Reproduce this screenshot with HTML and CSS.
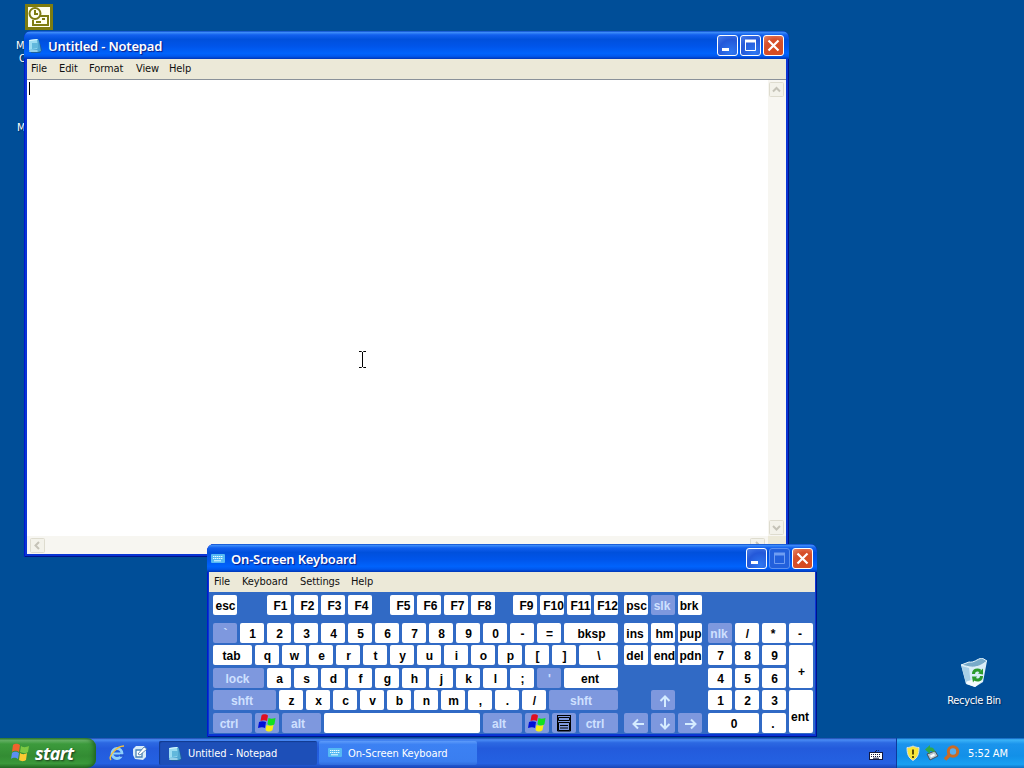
FILE: index.html
```
<!DOCTYPE html>
<html lang="en">
<head>
    <meta charset="UTF-8">
    <title>Desktop</title>
    <link rel="stylesheet" href="styles.css">
</head>
<body>

    <!-- Shared icons -->
    <svg class="defs" width="0" height="0">
        <symbol id="note" viewBox="0 0 16 16">
            <path d="M3 3l9-1 3 10-2 3-9 0z" fill="#1d5f9c"/>
            <path d="M3 2l8-1 1 2 2 10-3 1-9 0z" fill="#4fa6d2"/>
            <path d="M2 2l8-1 1 8-1 2-8 1z" fill="#9bdcf2"/>
            <path d="M5 5l6 0 0 5-6 1z" fill="#62b8dc"/>
            <path d="M2.500 2.500l8-1M2.500 13l8 0" stroke="#dcf8ff"/>
        </symbol>
        <symbol id="kbd" viewBox="0 0 16 16">
            <rect x="1" y="3" width="14" height="9" rx="1" fill="#55b9f4"/>
            <path d="M3 5.500h10M3 7.500h10" stroke="#e6fbff" stroke-dasharray="1.400 .6"/>
            <path d="M4 9.800h7" stroke="#e6fbff"/>
        </symbol>
        <symbol id="winkey" viewBox="0 0 18 18">
            <path d="M3.500 1.500c2-2 5-1 6.500 0l-1 5.500c-2-1-4-1-6.500 0z" fill="#e01020"/>
            <path d="M10.500 4c2 1 4 1 7 0l-1 6c-2 2-5 2-7 0z" fill="#10e020"/>
            <path d="M1 8c2-1 5-1 7 0l-1 6c-2-1-4-1-7 0z" fill="#0010d8"/>
            <path d="M8.500 11c2 1 5 1 7 0l-1 5c-2 2-5 2-7 0z" fill="#f8f010"/>
        </symbol>
        <symbol id="arrow" viewBox="0 0 14 14">
            <path d="M13 7H3M7 2.500L2.500 7L7 11.500" fill="none" stroke="#d5ecff" stroke-width="2"/>
        </symbol>
    </svg>

    <div class="desktop">
        <div class="shortcuts">
            <svg width="28" height="26" viewBox="0 0 28 26">
                <rect width="28" height="26" fill="#7e7c10"/>
                <rect x="3" y="3" width="22" height="20" fill="#fffff0"/>
                <g fill="none" stroke="#7e7c10" stroke-width="2">
                    <circle cx="10" cy="9.500" r="5.500"/>
                    <path d="M10 6v4h3M15 12h8v9H8v-5M17 15h3M11 18h5"/>
                </g>
            </svg>
            <span class="label label-m">M</span>
            <span class="label label-o">O</span>
            <span class="label label-n">M</span>
        </div>

        <div class="recycle">
            <svg width="30" height="32" viewBox="0 0 30 32">
                <path d="M2 7l9 2 17-6-4 21-8 5-9-3z" fill="#d9edf8"/>
                <path d="M2 7l8-3c5 1 8-3 13-4l5 3c-5 4-10 7-17 6z" fill="#78aac9" stroke="#e8f6fd"/>
                <path d="M2.500 8l4.500 17 5 2-2-17z" fill="#a8cfe6"/>
                <path d="M7 24c5-3 10-2 16-1l-7 6-8-3z" fill="#f4fbff"/>
                <g fill="none" stroke="#2c9a2c" stroke-width="3">
                    <path d="M14.500 16c0-4 4-5 7-3M22.500 18c0 4-4 5-7 3"/>
                </g>
                <path d="M19 15.500l5-5v6zM18 18.500l-5 0 1 6z" fill="#2c9a2c"/>
            </svg>
            <span class="label">Recycle Bin</span>
        </div>

        <!-- Notepad -->
        <div class="window notepad">
            <div class="titlebar">
                <svg class="title-icon" width="16" height="16"><use href="#note"/></svg>
                <span class="title">Untitled - Notepad</span>
                <div class="buttons">
                    <span class="btn"><svg width="19" height="19"><rect x="4" y="12" width="7" height="3" fill="#fff"/></svg></span>
                    <span class="btn"><svg width="19" height="19"><path d="M4.500 4v10.500h10V4" fill="none" stroke="#fff"/><path d="M4 5h11" stroke="#fff" stroke-width="3"/></svg></span>
                    <span class="btn close"><svg width="19" height="19"><path d="M4.500 4.500l10 10M14.500 4.500l-10 10" stroke="#fff" stroke-width="2.200"/></svg></span>
                </div>
            </div>
            <div class="menubar">
                <span class="m-file">File</span>
                <span class="m-edit">Edit</span>
                <span class="m-format">Format</span>
                <span class="m-view">View</span>
                <span>Help</span>
            </div>
            <div class="editor">
                <div class="page"><span class="caret"></span></div>
                <div class="vscroll">
                    <svg width="16" height="16"><rect x=".5" y=".5" width="14" height="14" rx="1" fill="#f3f2ea" stroke="#dedccf"/><path d="M4 9.500l3.500-3.500L11 9.500" fill="none" stroke="#c5c3b8" stroke-width="2"/></svg>
                    <svg width="16" height="16"><rect x=".5" y=".5" width="14" height="14" rx="1" fill="#f3f2ea" stroke="#dedccf"/><path d="M4 6l3.500 3.500L11 6" fill="none" stroke="#c5c3b8" stroke-width="2"/></svg>
                </div>
                <div class="hscroll">
                    <svg width="16" height="16"><rect x=".5" y=".5" width="14" height="14" rx="1" fill="#f3f2ea" stroke="#dedccf"/><path d="M9 4L5.500 7.500 9 11" fill="none" stroke="#c5c3b8" stroke-width="2"/></svg>
                    <svg width="16" height="16"><rect x=".5" y=".5" width="14" height="14" rx="1" fill="#f3f2ea" stroke="#dedccf"/><path d="M6 4l3.500 3.500L6 11" fill="none" stroke="#c5c3b8" stroke-width="2"/></svg>
                </div>
                <div class="corner"></div>
            </div>
        </div>

        <svg class="ibeam" width="9" height="17"><path d="M1 .5h2.500l1 1 1-1H8M1 16.500h2.500l1-1 1 1H8M4.500 1v15" fill="none" stroke="#000"/></svg>

        <!-- On-Screen Keyboard -->
        <div class="window osk">
            <div class="titlebar">
                <svg class="title-icon" width="16" height="16"><use href="#kbd"/></svg>
                <span class="title">On-Screen Keyboard</span>
                <div class="buttons">
                    <span class="btn"><svg width="19" height="19"><rect x="4" y="12" width="7" height="3" fill="#fff"/></svg></span>
                    <span class="btn disabled"><svg width="19" height="19"><path d="M4.500 4v10.500h10V4" fill="none" stroke="#6f9df2"/><path d="M4 5h11" stroke="#6f9df2" stroke-width="3"/></svg></span>
                    <span class="btn close"><svg width="19" height="19"><path d="M4.500 4.500l10 10M14.500 4.500l-10 10" stroke="#fff" stroke-width="2.200"/></svg></span>
                </div>
            </div>
            <div class="menubar">
                <span class="k-file">File</span>
                <span class="k-keyboard">Keyboard</span>
                <span class="k-settings">Settings</span>
                <span>Help</span>
            </div>
            <div class="keys">
                <div class="main">
                    <div class="row">
                        <b class="gap-esc">esc</b><b class="fn">F1</b><b class="fn">F2</b><b class="fn">F3</b><b class="fn gap-f">F4</b>
                        <b class="fn">F5</b><b class="fn">F6</b><b class="fn">F7</b><b class="fn gap-f">F8</b>
                        <b class="fn">F9</b><b class="fn">F10</b><b class="fn">F11</b><b class="fn">F12</b>
                    </div>
                    <div class="row">
                        <b class="mod">`</b><b>1</b><b>2</b><b>3</b><b>4</b><b>5</b><b>6</b><b>7</b><b>8</b><b>9</b><b>0</b><b>-</b><b>=</b><b class="w54">bksp</b>
                    </div>
                    <div class="row">
                        <b class="w39 left">tab</b><b>q</b><b>w</b><b>e</b><b>r</b><b>t</b><b>y</b><b>u</b><b>i</b><b>o</b><b>p</b><b>[</b><b>]</b><b class="w39">\</b>
                    </div>
                    <div class="row">
                        <b class="w51 mod left">lock</b><b>a</b><b>s</b><b>d</b><b>f</b><b>g</b><b>h</b><b>j</b><b>k</b><b>l</b><b>;</b><b class="mod">'</b><b class="w54 left">ent</b>
                    </div>
                    <div class="row">
                        <b class="w63 mod shift">shft</b><b>z</b><b>x</b><b>c</b><b>v</b><b>b</b><b>n</b><b>m</b><b>,</b><b>.</b><b>/</b><b class="w69 mod shift">shft</b>
                    </div>
                    <div class="row">
                        <b class="w39 mod ctrl">ctrl</b><b class="mod icon"><svg width="18" height="18"><use href="#winkey"/></svg></b><b class="w39 mod ctrl">alt</b><b class="space"></b><b class="w39 mod ctrl">alt</b><b class="mod icon"><svg width="18" height="18"><use href="#winkey"/></svg></b><b class="mod icon"><svg width="14" height="18"><path d="M0 1.500h14M1.500 3.500h11v3h-11zM1.500 8.500h11v8h-11zM3 11.500h8M3 14h8" fill="none" stroke="#000"/><path d="M.5 1v16h13V1" fill="none" stroke="#000"/></svg></b><b class="w39 mod ctrl">ctrl</b>
                    </div>
                </div>
                <div class="nav">
                    <div class="row"><b>psc</b><b class="mod nudge">slk</b><b class="nudge">brk</b></div>
                    <div class="row"><b class="nudge">ins</b><b class="right">hm</b><b>pup</b></div>
                    <div class="row"><b class="nudge">del</b><b class="right">end</b><b>pdn</b></div>
                    <div class="row"></div>
                    <div class="row middle"><b class="mod arrow"><svg class="up" width="14" height="14"><use href="#arrow"/></svg></b></div>
                    <div class="row">
                        <b class="mod arrow"><svg width="14" height="14"><use href="#arrow"/></svg></b>
                        <b class="mod arrow"><svg class="down" width="14" height="14"><use href="#arrow"/></svg></b>
                        <b class="mod"><svg class="fwd" width="14" height="14"><use href="#arrow"/></svg></b>
                    </div>
                </div>
                <div class="numpad">
                    <b class="mod nudge">nlk</b><b>/</b><b class="nudge">*</b><b class="nudge">-</b>
                    <b>7</b><b>8</b><b>9</b><b class="tall plus">+</b>
                    <b>4</b><b>5</b><b>6</b>
                    <b>1</b><b>2</b><b>3</b><b class="tall enter">ent</b>
                    <b class="wide">0</b><b class="nudge">.</b>
                </div>
            </div>
        </div>

        <!-- Taskbar -->
        <div class="taskbar">
            <div class="start">
                <svg width="21" height="19" viewBox="0 0 21 19">
                    <path d="M3 2c3-2 5-1 7 0l-1 7c-2-1-4-2-7 0z" fill="#f0622d"/>
                    <path d="M11 3c3 2 5 1 8 0l-1 6c-3 2-5 1-8 0z" fill="#7cc843"/>
                    <path d="M2 10c3-2 5-1 7 0l-1 6c-2-1-4-2-7 0z" fill="#5b8ff2"/>
                    <path d="M10 10c3 2 5 1 7 0l-1 7c-3 2-5 1-7 0z" fill="#fbca32"/>
                </svg>
                <span>start</span>
            </div>
            <div class="quick">
                <svg width="16" height="18" viewBox="0 0 16 18">
                    <circle cx="8" cy="9.500" r="5" fill="none" stroke="#8fd0fb" stroke-width="2.800"/>
                    <path d="M4 9.500h9" stroke="#8fd0fb" stroke-width="2"/>
                    <path d="M11 11.500h4" stroke="#2456cf" stroke-width="2.500"/>
                    <path d="M2 16C-1 13 7 2 15 2" fill="none" stroke="#f0c040" stroke-width="1.500"/>
                </svg>
                <svg width="16" height="16" viewBox="0 0 16 16">
                    <path d="M1 4l3-3 8 0 2 3 0 8-3 3-8-1-2-4z" fill="#d8ebf8"/>
                    <path d="M4 5h6v7H4z" fill="#fff" stroke="#4583b8" stroke-width="1.300"/>
                    <path d="M6 9l6-7 3 2-7 6z" fill="#fff" stroke="#3c6f9e" stroke-width=".8"/>
                </svg>
            </div>
            <div class="task active"><svg width="16" height="16"><use href="#note"/></svg><span>Untitled - Notepad</span></div>
            <div class="task"><svg width="16" height="16"><use href="#kbd"/></svg><span>On-Screen Keyboard</span></div>
            <svg class="langbar" width="14" height="14" viewBox="0 0 14 14">
                <path d="M6.500 5V3.500h3V2" fill="none" stroke="#101840" stroke-dasharray="1 1"/>
                <rect x=".5" y="5.500" width="13" height="7" fill="#fff" stroke="#101840"/>
                <path d="M2 7.500h10M2 9.500h10" stroke="#101840" stroke-dasharray="1 1"/>
                <path d="M4 11.200h6" stroke="#101840"/>
            </svg>
            <div class="tray">
                <svg width="14" height="16" viewBox="0 0 14 16">
                    <path d="M7 1c2 1 4 1.500 6 1.500 0 6-1 10-6 13-5-3-6-7-6-13C3 2.500 5 2 7 1z" fill="#f8e63a" stroke="#d9dfe6"/>
                    <path d="M7 4.500v5M7 11v2" stroke="#3a3200" stroke-width="1.700"/>
                </svg>
                <svg width="15" height="16" viewBox="0 0 15 16">
                    <path d="M3 9l8-3 3 5-8 4z" fill="#b9c4cd" stroke="#44525e"/>
                    <path d="M6.500 11.500l4-2" stroke="#fff" stroke-width="2"/>
                    <path d="M1 4.500l5-4.500v2.500c4 0 5 2 4.500 5C9.500 6.500 8 6 6 6v3z" fill="#32a848"/>
                </svg>
                <svg width="17" height="16" viewBox="0 0 17 16">
                    <circle cx="10" cy="6.500" r="4.700" fill="#58aef0" stroke="#c96b25" stroke-width="3"/>
                    <path d="M7 9.500L2 14.500" stroke="#c96b25" stroke-width="3.500"/>
                </svg>
                <span class="clock">5:52 AM</span>
            </div>
        </div>
    </div>

</body>
</html>
```
FILE: styles.css
```
* {
    box-sizing: border-box;
}

body {
    margin: 0;
    font-family: "DejaVu Sans Condensed", "DejaVu Sans", sans-serif;
    font-stretch: condensed;
    font-size: 11px;
    overflow: hidden;
}

svg {
    display: block;
    flex: none;
}

.defs {
    position: absolute;
}

.desktop {
    position: relative;
    width: 1024px;
    height: 768px;
    background: #004e98;
    overflow: hidden;
    white-space: nowrap;
}

/* Desktop icons */
.shortcuts {
    position: absolute;
    left: 25px;
    top: 4px;
}

.label {
    color: #fff;
    font-size: 11px;
    letter-spacing: -0.3px;
    line-height: 13px;
    text-shadow: 1px 1px 1px #002a5c;
}

.shortcuts .label {
    display: block;
    width: 12px;
    margin-left: -9px;
}

.shortcuts .label-m {
    margin-top: 9px;
}

.shortcuts .label-o {
    margin-left: -6px;
}

.shortcuts .label-n {
    margin-top: 56px;
    margin-left: -8px;
}

.recycle {
    position: absolute;
    left: 934px;
    top: 658px;
    width: 80px;
    display: flex;
    flex-direction: column;
    align-items: center;
    gap: 4px;
}

/* Windows */
.window {
    position: absolute;
    display: flex;
    flex-direction: column;
    border-radius: 7px 7px 0 0;
    padding: 0 3px 3px;
    background: #0a35d4;
    box-shadow: inset 1px 0 #0019cf, inset -1px -1px #00138c;
}

.notepad {
    left: 24px;
    top: 31px;
    width: 765px;
    height: 526px;
}

.osk {
    left: 207px;
    top: 544px;
    width: 610px;
    height: 193px;
    padding: 0 2px 3px;
}

.titlebar {
    display: flex;
    align-items: center;
    flex: none;
    height: 28px;
    margin: 0 -3px;
    padding: 1px 5px 0 3px;
    border-radius: 7px 7px 0 0;
    background: linear-gradient(#0a47c8 0, #3c8cf8 5%, #1260ee 14%, #0050dc 30%, #0055ea 55%, #0063fc 80%, #0058ee 90%, #0036b6 100%);
}

.osk .titlebar {
    margin: 0 -2px;
    padding-right: 4px;
}

.title {
    flex: 1;
    margin-left: 5px;
    color: #fff;
    font-family: "Noto Sans", sans-serif;
    font-stretch: normal;
    font-weight: 600;
    font-size: 13px;
    letter-spacing: -0.2px;
    line-height: 18px;
    padding-top: 1px;
    text-shadow: 1px 1px 1px #0a1883;
}

.buttons {
    display: flex;
    gap: 2px;
}

.btn {
    width: 21px;
    height: 21px;
    border: 1px solid #fff;
    border-radius: 3px;
    background: radial-gradient(circle at 70% 85%, #2f78f2, #2458d8 60%, #4a7eea);
}

.btn.close {
    background: radial-gradient(circle at 60% 75%, #d64a1e, #d6502c 60%, #e88a6c);
}

.btn.disabled {
    border-color: #5c90ee;
    background: #2260dc;
}

.menubar {
    display: flex;
    align-items: center;
    flex: none;
    height: 20px;
    padding: 0 0 2px 4px;
    background: #ece9d8;
    color: #111;
    font-size: 11px;
    letter-spacing: -0.1px;
}

.m-file { width: 28px; }
.m-edit { width: 30px; }
.m-format { width: 47px; }
.m-view { width: 33px; }

.osk .menubar {
    padding: 0 0 1px 5px;
}

.k-file { width: 28px; }
.k-keyboard { width: 58px; }
.k-settings { width: 51px; }

.editor {
    flex: 1;
    display: grid;
    grid-template-columns: 1fr 18px;
    grid-template-rows: 1fr 18px;
    border-top: 1px solid #8a9199;
    background: #fff;
}

.caret {
    display: block;
    width: 1px;
    height: 13px;
    margin: 2px 0 0 2px;
    background: #000;
}

.vscroll,
.hscroll {
    display: flex;
    justify-content: space-between;
    background: #f7f6f1;
}

.vscroll {
    flex-direction: column;
    padding: 2px 1px 0;
}

.hscroll {
    padding: 2px 2px 0 3px;
}

.corner {
    background: #ece9d8;
}

.ibeam {
    position: absolute;
    left: 358px;
    top: 351px;
}

/* Keyboard */
.keys {
    flex: 1;
    display: flex;
    gap: 6px;
    padding: 3px 2px 0 4px;
    background: #316ac5;
    font: bold 12px/20px "Liberation Sans", Arial, sans-serif;
}

.main,
.nav {
    display: grid;
    grid-template-rows: 28px 22px 23px 22px 23px 20px;
}

.row {
    display: flex;
    gap: 3px;
    height: 20px;
}

.middle {
    justify-content: center;
}

.keys b {
    display: flex;
    align-items: center;
    justify-content: center;
    flex: none;
    width: 24px;
    padding: 1px 0 0 1px;
    border-radius: 2px;
    background: #fff;
    color: #000;
    overflow: hidden;
}

.keys .mod {
    background: #7e98de;
    color: #cfe0ff;
}

.keys .gap-esc { margin-right: 27px; }
.keys .gap-f { margin-right: 15px; }
.keys .w39 { width: 39px; }
.keys .w51 { width: 51px; }
.keys .w54 { width: 54px; }
.keys .w63 { width: 63px; }
.keys .w69 { width: 69px; }
.keys .space { width: 156px; }
.keys .fn { padding-left: 3px; }
.keys .icon { padding: 0; }
.keys .left { padding: 1px 2px 0 0; }
.keys .ctrl { padding: 1px 7px 0 0; }
.keys .shift { padding: 1px 5px 0 0; }
.keys .right { padding-left: 3px; }
.keys .nudge { padding: 1px 2px 0 0; }
.keys .arrow { padding-left: 4px; }

.up { transform: rotate(90deg); }
.down { transform: rotate(-90deg); }
.fwd { transform: rotate(180deg); }

.numpad {
    display: grid;
    grid-template-columns: repeat(4, 24px);
    grid-template-rows: 22px 23px 22px 23px 20px;
    column-gap: 3px;
    padding-top: 28px;
}

.numpad b {
    height: 20px;
}

.numpad .tall {
    grid-row: span 2;
    height: 43px;
}

.keys .plus {
    padding-top: 11px;
}

.keys .enter {
    padding: 11px 2px 0 0;
}

.keys .wide {
    grid-column: span 2;
    width: 51px;
}

/* Taskbar */
.taskbar {
    position: absolute;
    left: 0;
    bottom: 0;
    width: 1024px;
    height: 30px;
    display: flex;
    align-items: center;
    background: linear-gradient(#1a45a8 0, #4a8cf5 6%, #2c68e2 16%, #235bdc 35%, #2461e2 85%, #1a45b4 100%);
    color: #fff;
}

.start {
    display: flex;
    align-items: center;
    gap: 4px;
    width: 96px;
    height: 30px;
    padding: 0 0 1px 10px;
    border-radius: 0 9px 9px 0;
    background: linear-gradient(#2e7a2e 0, #64b064 8%, #3c9a3c 20%, #338c33 60%, #3a983a 85%, #256c25 100%);
    box-shadow: inset -4px 0 5px -2px #1d5f1d;
    font: italic bold 18px "Open Sans", sans-serif;
    letter-spacing: -0.6px;
    text-shadow: 1px 1px 2px #1a3a1a;
}

.quick {
    display: flex;
    align-items: center;
    gap: 7px;
    width: 63px;
    padding-left: 13px;
}

.task {
    display: flex;
    align-items: center;
    gap: 5px;
    width: 158px;
    height: 24px;
    padding-left: 8px;
    border-radius: 2px;
    background: linear-gradient(#5d9bfa, #3c81f3 15%, #3a7ef0 85%, #2f6bdc);
    font-size: 11px;
    letter-spacing: -0.1px;
}

.task.active {
    margin-right: 2px;
    padding-top: 1px;
    background: #1d4fb8;
    box-shadow: inset 1px 1px 1px #123a8f;
}

.langbar {
    margin: 2px 13px 0 auto;
}

.tray {
    display: flex;
    align-items: center;
    gap: 4px;
    width: 128px;
    height: 30px;
    padding-left: 9px;
    border-left: 1px solid #0d3a9c;
    background: linear-gradient(#0c59b9 0, #3cb4f8 6%, #1b94ec 20%, #1290e8 60%, #18a0f2 88%, #0f70c4 100%);
}

.clock {
    margin-left: 4px;
    font-size: 11px;
    letter-spacing: -0.1px;
}
```
